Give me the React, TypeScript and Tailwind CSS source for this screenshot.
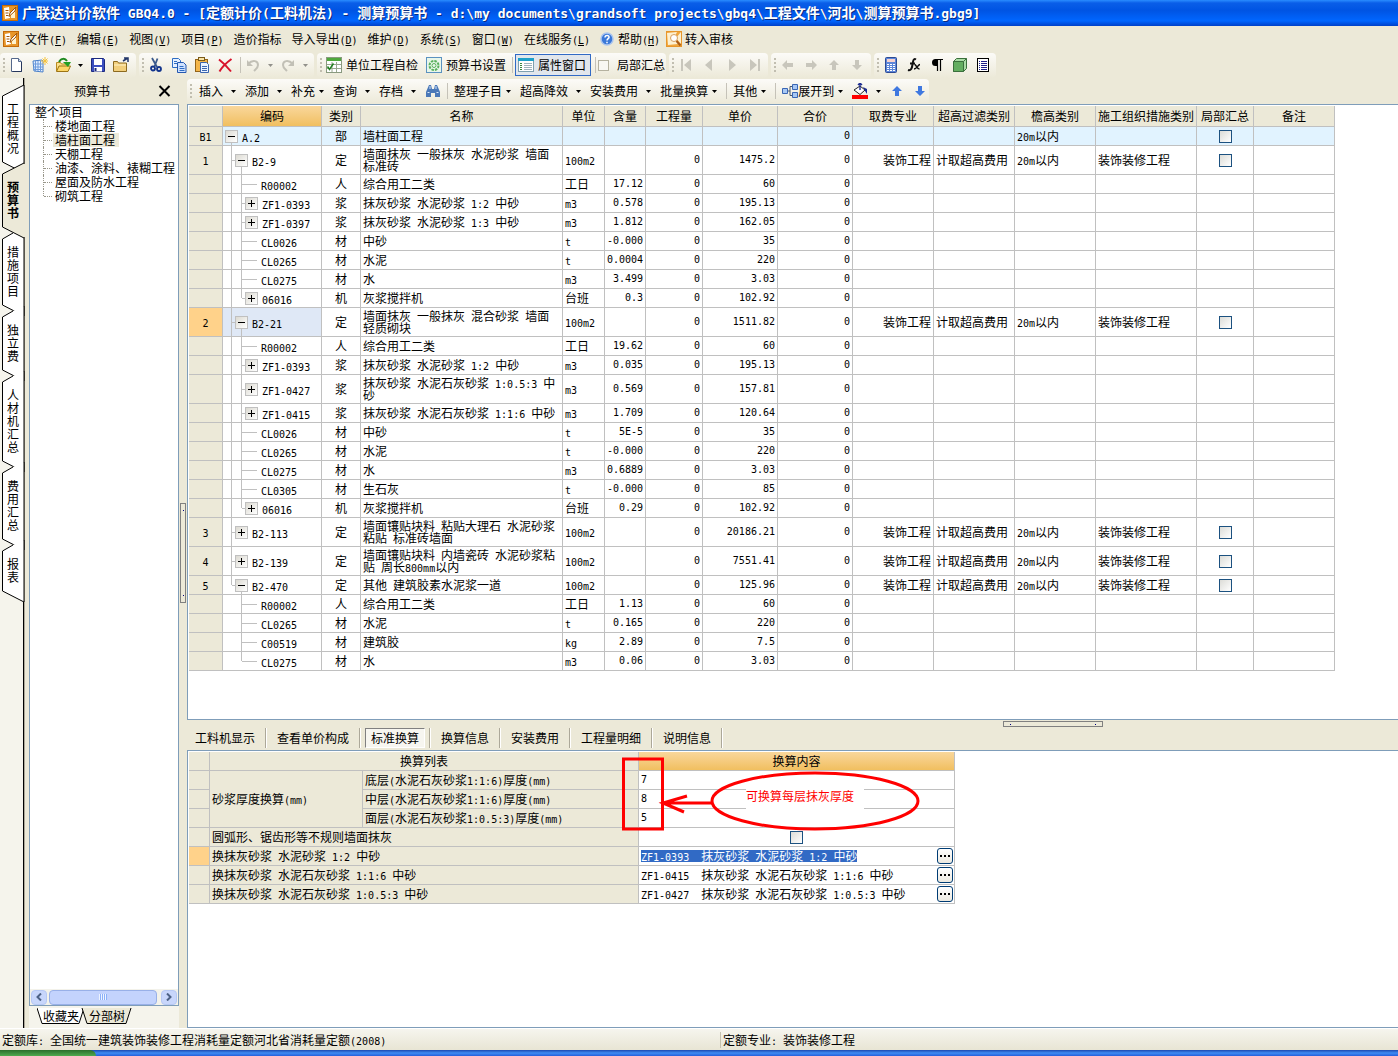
import { Fragment, useState, type ReactNode } from "react";

const CODE_FONT = "font-['DejaVu_Sans_Mono',monospace]";

// Latin runs are set in a mono face so two of them fill one Chinese glyph
function Txt({ children }: { children: string }) {
  const parts = children.match(/[\x20-\x7e]+|[^\x20-\x7e]+/g) ?? [];
  return (
    <>
      {parts.map((part, i) =>
        /^[\x20-\x7e]/.test(part) ? (
          <span key={i} className="font-['DejaVu_Sans_Mono',monospace] text-[10px] leading-0">
            {part}
          </span>
        ) : (
          <Fragment key={i}>{part}</Fragment>
        ),
      )}
    </>
  );
}

type Row = {
  no?: string;
  level: 0 | 1 | 2;
  box?: "+" | "-";
  last?: boolean;
  pass?: boolean;
  code: string;
  kind: string;
  name: string;
  unit?: string;
  amount?: string;
  price?: string;
  tall?: boolean;
};

const ROWS: Row[] = [
  { no: "B1", level: 0, box: "-", code: "A.2", kind: "部", name: "墙柱面工程" },
  { no: "1", level: 1, box: "-", code: "B2-9", kind: "定", name: "墙面抹灰 一般抹灰 水泥砂浆 墙面标准砖", unit: "100m2", price: "1475.2", tall: true },
  { level: 2, pass: true, code: "R00002", kind: "人", name: "综合用工二类", unit: "工日", amount: "17.12", price: "60" },
  { level: 2, pass: true, box: "+", code: "ZF1-0393", kind: "浆", name: "抹灰砂浆 水泥砂浆 1:2 中砂", unit: "m3", amount: "0.578", price: "195.13" },
  { level: 2, pass: true, box: "+", code: "ZF1-0397", kind: "浆", name: "抹灰砂浆 水泥砂浆 1:3 中砂", unit: "m3", amount: "1.812", price: "162.05" },
  { level: 2, pass: true, code: "CL0026", kind: "材", name: "中砂", unit: "t", amount: "-0.000", price: "35" },
  { level: 2, pass: true, code: "CL0265", kind: "材", name: "水泥", unit: "t", amount: "0.0004", price: "220" },
  { level: 2, pass: true, code: "CL0275", kind: "材", name: "水", unit: "m3", amount: "3.499", price: "3.03" },
  { level: 2, pass: true, box: "+", last: true, code: "06016", kind: "机", name: "灰浆搅拌机", unit: "台班", amount: "0.3", price: "102.92" },
  { no: "2", level: 1, box: "-", code: "B2-21", kind: "定", name: "墙面抹灰 一般抹灰 混合砂浆 墙面轻质砌块", unit: "100m2", price: "1511.82", tall: true },
  { level: 2, pass: true, code: "R00002", kind: "人", name: "综合用工二类", unit: "工日", amount: "19.62", price: "60" },
  { level: 2, pass: true, box: "+", code: "ZF1-0393", kind: "浆", name: "抹灰砂浆 水泥砂浆 1:2 中砂", unit: "m3", amount: "0.035", price: "195.13" },
  { level: 2, pass: true, box: "+", code: "ZF1-0427", kind: "浆", name: "抹灰砂浆 水泥石灰砂浆 1:0.5:3 中砂", unit: "m3", amount: "0.569", price: "157.81", tall: true },
  { level: 2, pass: true, box: "+", code: "ZF1-0415", kind: "浆", name: "抹灰砂浆 水泥石灰砂浆 1:1:6 中砂", unit: "m3", amount: "1.709", price: "120.64" },
  { level: 2, pass: true, code: "CL0026", kind: "材", name: "中砂", unit: "t", amount: "5E-5", price: "35" },
  { level: 2, pass: true, code: "CL0265", kind: "材", name: "水泥", unit: "t", amount: "-0.000", price: "220" },
  { level: 2, pass: true, code: "CL0275", kind: "材", name: "水", unit: "m3", amount: "0.6889", price: "3.03" },
  { level: 2, pass: true, code: "CL0305", kind: "材", name: "生石灰", unit: "t", amount: "-0.000", price: "85" },
  { level: 2, pass: true, box: "+", last: true, code: "06016", kind: "机", name: "灰浆搅拌机", unit: "台班", amount: "0.29", price: "102.92" },
  { no: "3", level: 1, box: "+", code: "B2-113", kind: "定", name: "墙面镶贴块料 粘贴大理石 水泥砂浆粘贴 标准砖墙面", unit: "100m2", price: "20186.21", tall: true },
  { no: "4", level: 1, box: "+", code: "B2-139", kind: "定", name: "墙面镶贴块料 内墙瓷砖 水泥砂浆粘贴 周长800mm以内", unit: "100m2", price: "7551.41", tall: true },
  { no: "5", level: 1, box: "-", last: true, code: "B2-470", kind: "定", name: "其他 建筑胶素水泥浆一道", unit: "100m2", price: "125.96" },
  { level: 2, code: "R00002", kind: "人", name: "综合用工二类", unit: "工日", amount: "1.13", price: "60" },
  { level: 2, code: "CL0265", kind: "材", name: "水泥", unit: "t", amount: "0.165", price: "220" },
  { level: 2, code: "C00519", kind: "材", name: "建筑胶", unit: "kg", amount: "2.89", price: "7.5" },
  { level: 2, last: true, code: "CL0275", kind: "材", name: "水", unit: "m3", amount: "0.06", price: "3.03" },
];

const COLUMNS = [
  { title: "", width: 34 },
  { title: "编码", width: 99 },
  { title: "类别", width: 39 },
  { title: "名称", width: 202 },
  { title: "单位", width: 42 },
  { title: "含量", width: 41 },
  { title: "工程量", width: 57 },
  { title: "单价", width: 75 },
  { title: "合价", width: 75 },
  { title: "取费专业", width: 81 },
  { title: "超高过滤类别", width: 81 },
  { title: "檐高类别", width: 81 },
  { title: "施工组织措施类别", width: 101 },
  { title: "局部汇总", width: 57 },
  { title: "备注", width: 81 },
];

const MENUS = [
  ["文件", "F"],
  ["编辑", "E"],
  ["视图", "V"],
  ["项目", "P"],
  ["造价指标", ""],
  ["导入导出", "D"],
  ["维护", "D"],
  ["系统", "S"],
  ["窗口", "W"],
  ["在线服务", "L"],
];

const SIDE_TABS = ["工程概况", "预算书", "措施项目", "独立费", "人材机汇总", "费用汇总", "报表"];
const TREE = ["楼地面工程", "墙柱面工程", "天棚工程", "油漆、涂料、裱糊工程", "屋面及防水工程", "砌筑工程"];
const DETAIL_TABS = ["工料机显示", "查看单价构成", "标准换算", "换算信息", "安装费用", "工程量明细", "说明信息"];

/* ---------- icons ---------- */

function Icon({ children }: { children: ReactNode }) {
  return (
    <svg width="16" height="16" viewBox="0 0 16 16" fill="none" className="shrink-0" aria-hidden="true">
      {children}
    </svg>
  );
}

const LogoIcon = () => (
  <Icon>
    <rect x="0.500" y="0.500" width="15" height="15" fill="#e8962a" stroke="#c46a08" />
    <path d="M2 3l5-1 1 11-5 1z" fill="#fff" />
    <path d="M3.500 5.500h3M3.500 8h3M4 10.500h2.500" stroke="#a35606" />
    <path d="M9 13V8l4-2v7z" fill="#fff3cf" />
    <path d="M14 2L8 8l-1 3.500L13 6z" fill="#fff" stroke="#a35606" />
  </Icon>
);
const NewIcon = () => (
  <Icon>
    <path d="M2.500 1.500h7l3 3v10h-10z" fill="#fff" stroke="#55688c" />
    <path d="M9.500 1.500v3h3" fill="#cfdcf2" stroke="#55688c" />
    <path d="M12.500 5v9.500h-9" stroke="#26375c" />
  </Icon>
);
const SheetIcon = () => (
  <Icon>
    <path d="M1 4l9-1 1 1v11l-9-1z" fill="#e3efff" stroke="#4a80c8" />
    <path d="M3.500 4v10M6 4v10M8.500 4v11M1 7h10M1 10h10M1 12.500h10" stroke="#6d9bdc" />
    <path d="M13 0v8M9 4h7M10.500 1.500l5 5M15.500 1.500l-5 5" stroke="#f5c23b" />
  </Icon>
);
const OpenIcon = () => (
  <Icon>
    <path d="M1.500 14V5.500h4l1 1.500h6V9" fill="#fbe08a" stroke="#b98a1f" />
    <path d="M1.500 14.500 4 9h11.500L13 14.500z" fill="#fcd667" stroke="#9c7414" />
    <path d="M4 5c2-4 6-4 8-1" stroke="#1f8a20" strokeWidth="2" />
    <path d="M8 5h8l-3 5z" fill="#22a022" />
  </Icon>
);
const SaveIcon = () => (
  <Icon>
    <path d="M1.500 1.500h12l1 1v12h-13z" fill="#3c4fc0" stroke="#1c2a80" />
    <path d="M4 2h8v6H4zM4 10h8v4.500H4z" fill="#fff" />
    <path d="M5.500 11v3" stroke="#1c2a80" strokeWidth="2" />
  </Icon>
);
const FolderIcon = () => (
  <Icon>
    <path d="M0.500 14.500v-10h4l1 1.500h8v8.500z" fill="#f2cf7c" stroke="#8c6a20" />
    <path d="M1 8h12" stroke="#fff3c8" />
    <path d="M10 4l4-2.500M11 1h4v4" stroke="#203468" strokeWidth="1.500" />
  </Icon>
);
const CutIcon = () => (
  <Icon>
    <path d="M4 1l5 9M9.500 1.500 6.500 9.500" stroke="#3b5a8c" strokeWidth="1.800" />
    <circle cx="5" cy="11.500" r="2" stroke="#12348c" strokeWidth="1.800" />
    <circle cx="11" cy="12" r="2" stroke="#12348c" strokeWidth="1.800" />
  </Icon>
);
const CopyIcon = () => (
  <Icon>
    <path d="M1.500 1.500h6l2 2v7h-8z" fill="#e6f1ff" stroke="#2f6dc4" />
    <path d="M6.500 5.500h6l2.500 2.500v7.500H6.500z" fill="#cfe2ff" stroke="#2458b0" />
    <path d="M3 4.500h3M3 6.500h3M8.500 9.500h4M8.500 11.500h5M8.500 13.500h5" stroke="#2f6dc4" />
  </Icon>
);
const PasteIcon = () => (
  <Icon>
    <rect x="1.500" y="2.500" width="12" height="12" fill="#f4b64a" stroke="#94651a" />
    <rect x="4.500" y="0.500" width="6" height="3" fill="#f9e3a4" stroke="#7a5a1a" />
    <path d="M6.500 5.500h6l2 2v8h-8z" fill="#eaf3ff" stroke="#3b66b0" />
    <path d="M8 9.500h5M8 11.500h5M8 13.500h5" stroke="#3b66b0" />
  </Icon>
);
const DeleteIcon = () => (
  <Icon>
    <path d="M2 2.500c4 3 8 7 12 12M14.500 2C9 6 5 10 2.500 14.500" stroke="#d8142c" strokeWidth="2" />
  </Icon>
);
const UndoIcon = ({ flip }: { flip?: boolean }) => (
  <Icon>
    <g transform={flip ? "matrix(-1 0 0 1 16 0)" : undefined}>
      <path d="M3 7c5-5 10-3 10 1 0 3-2 4-4 6" stroke="#c2c0b6" strokeWidth="2" />
      <path d="M2 3v6h6z" fill="#c2c0b6" />
    </g>
  </Icon>
);
const CheckSheetIcon = () => (
  <Icon>
    <rect x="0.500" y="0.500" width="15" height="15" fill="#fff" stroke="#8a9a80" />
    <path d="M1 1h14v3H1z" fill="#4ea83c" />
    <path d="M1 7.500h14M1 11.500h14M6 5v10M10.500 5v10" stroke="#9aa890" />
    <path d="M1.500 9.500l2 3 4-6" stroke="#208020" strokeWidth="1.500" />
  </Icon>
);
const GearSheetIcon = () => (
  <Icon>
    <rect x="0.500" y="0.500" width="15" height="15" fill="#e8f6ea" stroke="#5b92c0" />
    <circle cx="8" cy="8.500" r="4.500" stroke="#58b05c" strokeWidth="2" strokeDasharray="2.500 1" />
    <circle cx="8" cy="8.500" r="2" stroke="#58b05c" />
  </Icon>
);
const PropsIcon = () => (
  <Icon>
    <rect x="0.500" y="1.500" width="15" height="13" fill="#fff" stroke="#7fa0b0" />
    <path d="M0 1h16v3H0z" fill="#1da0c8" />
    <path d="M2 6.500h2M2 8.500h2M2 10.500h2M2 12.500h2" stroke="#38883c" />
    <path d="M6 6.500h8M6 8.500h8M6 10.500h8M6 12.500h8" stroke="#9fb2bc" />
  </Icon>
);
const NavIcon = ({ kind }: { kind: "first" | "prev" | "next" | "last" }) => (
  <Icon>
    {kind === "first" && <path d="M3 2h2v12H3zM13 2v12L6 8z" fill="#c8c6bc" />}
    {kind === "prev" && <path d="M11 2v12L4 8z" fill="#c8c6bc" />}
    {kind === "next" && <path d="M5 2v12l7-6z" fill="#c8c6bc" />}
    {kind === "last" && <path d="M11 2h2v12h-2zM3 2v12l7-6z" fill="#c8c6bc" />}
  </Icon>
);

const ARROWS = {
  left: "M2 8l5-5v3h6v4H7v3z",
  right: "M14 8L9 3v3H3v4h6v3z",
  up: "M8 3l5 5h-3v5H6V8H3z",
  down: "M8 13l5-5h-3V3H6v5H3z",
};
const ArrowIcon = ({ dir, color }: { dir: keyof typeof ARROWS; color: string }) => (
  <Icon>
    <path d={ARROWS[dir]} fill={color} />
  </Icon>
);
const CalcIcon = () => (
  <Icon>
    <rect x="2.500" y="0.500" width="11" height="15" rx="1" fill="#5d86d8" stroke="#2c4a94" />
    <path d="M4 2h8v3H4z" fill="#f6d2cf" />
    <path d="M4 7.500h8M4 9.500h8M4 11.500h8M4 13.500h8" stroke="#fff" strokeDasharray="2 1" />
  </Icon>
);
const FxIcon = () => (
  <Icon>
    <path d="M10 2.500C7.500 1 7 4 6.500 7.500S5 14 2 13M4 6.500h5" stroke="#111" strokeWidth="2" />
    <path d="M8.500 7.500c2 0 2 4.500 5 4.500M14 7.500c-2 0-3 4.500-6 4.500" stroke="#111" strokeWidth="1.500" />
  </Icon>
);
const ParaIcon = () => (
  <Icon>
    <path d="M8 2H6.500a3.500 3.500 0 0 0 0 7H8z" fill="#000" />
    <path d="M8.500 2v12M11.500 2v12M6 2.500h8" stroke="#000" strokeWidth="1.200" />
  </Icon>
);
const CubeIcon = () => (
  <Icon>
    <path d="M1.500 4.500l3-3h10v10l-3 3h-10z" fill="#a9dca5" stroke="#3a6f3c" />
    <path d="M1.500 4.500h10v10h-10z" fill="#63ad60" stroke="#3a6f3c" />
    <path d="M11.500 4.500l3-3" stroke="#3a6f3c" />
  </Icon>
);
const ListIcon = () => (
  <Icon>
    <rect x="2.500" y="1.500" width="11" height="13" fill="#fff" stroke="#000" />
    <path d="M4 4.500h1M6 4.500h6M4 6.500h1M6 6.500h6M4 8.500h1M6 8.500h6M4 10.500h1M6 10.500h6M4 12.500h1M6 12.500h6" stroke="#20208a" />
  </Icon>
);
const FindIcon = () => (
  <Icon>
    <path d="M1 14V9l3-7h2l1 4h2l1-4h2l3 7v5h-5v-4H6v4z" fill="#4a78b8" />
    <path d="M2.500 9.500h2M11.500 9.500h2M5 3v3M11 3v3" stroke="#d6e6fa" />
  </Icon>
);
const ExpandIcon = () => (
  <Icon>
    <path d="M6 8h2M8 3.500v9M8 3.500h2M8 12.500h2" stroke="#46566e" />
    <path d="M0.500 5.500h5v5h-5zM10.500 1.500h5v5h-5zM10.500 9.500h5v5h-5z" fill="#a8c8f4" stroke="#3a66b4" />
  </Icon>
);
const FillIcon = () => (
  <Icon>
    <path d="M2 7l6-4 5 4-5 4.500z" fill="#fff" stroke="#222" />
    <path d="M8 0v7M6 2l2-2 2 2" stroke="#1c2c90" strokeWidth="1.400" />
    <path d="M11 4l4 2v5l-2-3z" fill="#1c2c90" />
    <path d="M0 12h16v4H0z" fill="#f00" />
  </Icon>
);
const HelpIcon = () => (
  <svg width="14" height="14" viewBox="0 0 14 14" fill="none" className="shrink-0" aria-hidden="true">
    <circle cx="7" cy="7" r="6" fill="#3a78d8" stroke="#a9c4ee" strokeWidth="1.500" />
    <path d="M5 5.500C5 2.500 9.500 3 9 5.500 8.800 6.500 7 7 7 8.500M7 9.800v1.500" stroke="#fff" strokeWidth="1.500" />
  </svg>
);
const AuditIcon = () => (
  <Icon>
    <rect x="0.500" y="0.500" width="15" height="15" fill="#f0a63c" stroke="#e8962a" />
    <path d="M1 2l10-1-3 6 4 6-10 1z" fill="#fdf0d0" />
    <path d="M15 1l-5 6 5 6z" fill="#fdf0d0" />
    <circle cx="8" cy="7" r="3.500" fill="#fff" stroke="#d8a060" />
    <path d="M10.500 10l4 4.500" stroke="#a85a18" strokeWidth="2" />
  </Icon>
);
const Caret = () => (
  <svg width="5" height="3" viewBox="0 0 5 3" className="shrink-0" aria-hidden="true">
    <path d="M0 0h5L2.500 3z" fill="#000" />
  </svg>
);

/* ---------- toolbar parts ---------- */

function Group({ className, children }: { className: string; children: ReactNode }) {
  return (
    <div className={`flex h-[25px] shrink-0 items-center rounded-sm bg-gradient-to-b from-[#fcfbf8] to-[#ece9d8] pl-[3px] ${className}`}>
      <span className="h-[15px] w-0.5 shrink-0 bg-[repeating-linear-gradient(#c1beb0_0_2px,transparent_2px_4px)]" />
      {children}
    </div>
  );
}

function ToolButton({ label, children }: { label: string; children: ReactNode }) {
  return (
    <button type="button" aria-label={label} className="flex h-6 w-[23px] shrink-0 items-center justify-center">
      {children}
    </button>
  );
}

function DropButton({ label, tight }: { label: string; tight?: boolean }) {
  return (
    <button type="button" className={`flex shrink-0 items-center pr-[9px] ${tight ? "gap-1" : "gap-2"}`}>
      {label}
      <Caret />
    </button>
  );
}

const Sep = () => <span className="mr-1.5 h-4 w-px shrink-0 bg-[#c5c2b8]" />;

function TitleBar() {
  return (
    <header className="flex h-[26px] items-center gap-1 bg-[linear-gradient(#2a8cff_0,#0a5ee8_3px,#0054e3_40%,#0066ff_80%,#0040c8_100%)] px-0.5 pb-px">
      <LogoIcon />
      <h1 className="overflow-hidden text-sm leading-5 font-bold whitespace-pre text-white [text-shadow:1px_1px_#0a2a80]">
        {"广联达计价软件| GBQ4.0 - [|定额计价|(|工料机法|) - |测算预算书| - d:\\my documents\\grandsoft projects\\gbq4\\|工程文件|\\|河北|\\|测算预算书|.gbg9]"
          .split("|")
          .map((part, i) =>
            i % 2 ? (
              <span key={i} className="font-['DejaVu_Sans_Mono',monospace] text-[13px]">
                {part}
              </span>
            ) : (
              part
            ),
          )}
      </h1>
    </header>
  );
}

function MenuBar() {
  return (
    <nav className="flex h-[26px] items-center pl-[3px]">
      <LogoIcon />
      <div className="ml-1.5 flex gap-2.5 whitespace-nowrap">
        {MENUS.map(([label, key]) => (
          <button key={label} type="button">
            {label}
            {key && (
              <span className="font-['DejaVu_Sans_Mono',monospace] text-[10px]">
                (<u>{key}</u>)
              </span>
            )}
          </button>
        ))}
        <button type="button" className="flex items-center gap-1">
          <HelpIcon />
          <span>
            帮助
            <span className="font-['DejaVu_Sans_Mono',monospace] text-[10px]">
              (<u>H</u>)
            </span>
          </span>
        </button>
        <button type="button" className="-ml-1 flex items-center gap-[3px]">
          <AuditIcon />
          转入审核
        </button>
      </div>
    </nav>
  );
}

function MainToolbar() {
  return (
    <div className="flex h-[26px] items-center gap-[3px] whitespace-nowrap">
      <Group className="w-[136px]">
        <ToolButton label="新建"><NewIcon /></ToolButton>
        <ToolButton label="新建表"><SheetIcon /></ToolButton>
        <ToolButton label="打开"><OpenIcon /></ToolButton>
        <span className="w-3 pl-1"><Caret /></span>
        <ToolButton label="保存"><SaveIcon /></ToolButton>
        <ToolButton label="目录"><FolderIcon /></ToolButton>
      </Group>
      <Group className="w-[175px]">
        <ToolButton label="剪切"><CutIcon /></ToolButton>
        <ToolButton label="复制"><CopyIcon /></ToolButton>
        <ToolButton label="粘贴"><PasteIcon /></ToolButton>
        <ToolButton label="删除"><DeleteIcon /></ToolButton>
        <span className="ml-1 h-4 w-px bg-[#c5c2b8]" />
        <ToolButton label="撤销"><UndoIcon /></ToolButton>
        <span className="w-3 pl-1 opacity-40"><Caret /></span>
        <ToolButton label="重做"><UndoIcon flip /></ToolButton>
        <span className="w-3 pl-1 opacity-40"><Caret /></span>
      </Group>
      <Group className="w-[349px]">
        <button type="button" className="ml-1 flex items-center gap-1">
          <CheckSheetIcon />
          单位工程自检
        </button>
        <button type="button" className="ml-2 flex items-center gap-1">
          <GearSheetIcon />
          预算书设置
        </button>
        <span className="ml-1.5 h-4 w-px bg-[#c5c2b8]" />
        <button type="button" className="ml-0.5 flex h-[22px] items-center gap-1 border border-[#316ac5] bg-[#e1e6ec] pr-1 pl-0.5">
          <PropsIcon />
          属性窗口
        </button>
        <span className="ml-1 h-4 w-px bg-[#c5c2b8]" />
        <label className="ml-0.5 flex items-center gap-2">
          <input type="checkbox" className="size-[11px] appearance-none border border-[#b5b2a0] bg-[#f8f7f2]" />
          局部汇总
        </label>
      </Group>
      <Group className="w-[99px]">
        <ToolButton label="首条"><NavIcon kind="first" /></ToolButton>
        <ToolButton label="上一条"><NavIcon kind="prev" /></ToolButton>
        <ToolButton label="下一条"><NavIcon kind="next" /></ToolButton>
        <ToolButton label="末条"><NavIcon kind="last" /></ToolButton>
      </Group>
      <Group className="w-[100px]">
        <ToolButton label="左移"><ArrowIcon dir="left" color="#c8c6bc" /></ToolButton>
        <ToolButton label="右移"><ArrowIcon dir="right" color="#c8c6bc" /></ToolButton>
        <ToolButton label="上移"><ArrowIcon dir="up" color="#c8c6bc" /></ToolButton>
        <ToolButton label="下移"><ArrowIcon dir="down" color="#c8c6bc" /></ToolButton>
      </Group>
      <Group className="w-[122px]">
        <ToolButton label="计算器"><CalcIcon /></ToolButton>
        <ToolButton label="函数"><FxIcon /></ToolButton>
        <ToolButton label="段落"><ParaIcon /></ToolButton>
        <ToolButton label="模型"><CubeIcon /></ToolButton>
        <ToolButton label="列表"><ListIcon /></ToolButton>
      </Group>
    </div>
  );
}

function EditToolbar() {
  return (
    <div className="flex h-[26px] items-center whitespace-nowrap">
      <Group className="w-[742px]">
        <span className="w-[7px] shrink-0" />
        <DropButton label="插入" />
        <DropButton label="添加" />
        <DropButton label="补充" tight />
        <DropButton label="查询" />
        <DropButton label="存档" />
        <button type="button" aria-label="查找" className="mr-1.5"><FindIcon /></button>
        <Sep />
        <DropButton label="整理子目" tight />
        <DropButton label="超高降效" />
        <DropButton label="安装费用" />
        <DropButton label="批量换算" tight />
        <Sep />
        <DropButton label="其他" tight />
        <Sep />
        <ExpandIcon />
        <span className="w-0.5" />
        <DropButton label="展开到" tight />
        <button type="button" aria-label="填充颜色" className="mr-1 flex items-center gap-2">
          <FillIcon />
          <Caret />
        </button>
        <div className="flex">
          <ToolButton label="上移"><ArrowIcon dir="up" color="#3f78e0" /></ToolButton>
          <ToolButton label="下移"><ArrowIcon dir="down" color="#3f78e0" /></ToolButton>
        </div>
      </Group>
    </div>
  );
}

/* ---------- left side ---------- */

function SideTabs({ active, onPick }: { active: string; onPick: (tab: string) => void }) {
  return (
    <nav className="flex w-6 shrink-0 flex-col border-r border-black bg-[#f5f4ec] pt-[18px]">
      {SIDE_TABS.map((tab, i) => {
        const on = tab === active;
        const h = tab.length * 13 + 26;
        const top = on || i === 0 ? "M24 -11L2.5 0" : "M13 -6L2.5 0";
        return (
          <button
            key={tab}
            type="button"
            onClick={() => onPick(tab)}
            className={`relative block w-6 pt-1.5 pb-5 pl-[7px] text-left ${on ? "z-10" : ""}`}
          >
            <svg width="25" height={h} className="absolute top-0 left-0 overflow-visible" aria-hidden="true">
              <path
                d={`${top}V${h - 12}L24 ${h - 1}${on ? "" : "V-11"}`}
                fill={on ? "#ece9d8" : "#fff"}
                stroke="#000"
              />
              {on && <path d={`M24.500 -10V${h - 2}`} stroke="#ece9d8" strokeWidth="2" />}
            </svg>
            <span className={`relative block w-3 leading-[13px] break-all ${on ? "font-bold" : ""}`}>{tab}</span>
          </button>
        );
      })}
    </nav>
  );
}

function ProjectPanel() {
  return (
    <aside className="flex w-[155px] shrink-0 flex-col border-l border-[#aca899] pl-1">
      <div className="flex h-[26px] items-center justify-end gap-12 pr-2">
        <h2>预算书</h2>
        <button type="button" aria-label="关闭">
          <svg width="13" height="12" viewBox="0 0 13 12" aria-hidden="true">
            <path d="M1.500 1l10 10M11.500 1l-10 10" stroke="#000" strokeWidth="2" />
          </svg>
        </button>
      </div>
      <div className="flex flex-1 flex-col border border-[#7f9db9] bg-white">
        <ul className="flex-1 pl-[5px] leading-[14px] whitespace-nowrap">
          <li>
            整个项目
            <ul className="pl-2">
              {TREE.map((name, i) => (
                <li key={name} className="flex h-3.5">
                  <span className={`w-px border-l border-dotted border-[#98968a] ${i === TREE.length - 1 ? "h-[7px]" : "h-full"}`} />
                  <span className="mr-px h-2 w-2 border-b border-dotted border-[#98968a]" />
                  <button type="button" className={`px-0.5 ${i === 1 ? "bg-[#ece9d8] pr-1" : ""}`}>
                    {name}
                  </button>
                </li>
              ))}
            </ul>
          </li>
        </ul>
        <div className="flex h-4 items-center gap-0.5 bg-[#f3f2ea] px-px">
          <button type="button" aria-label="向左" className="flex h-[15px] w-4 items-center justify-center rounded-sm border border-[#b6c8f4] bg-[#c8d6fb]">
            <svg width="6" height="8" viewBox="0 0 6 8" fill="none"><path d="M5 0.500L1.500 4 5 7.500" stroke="#4d6185" strokeWidth="2" /></svg>
          </button>
          <div className="flex h-[15px] flex-1 items-center justify-center rounded-sm border border-[#98b0e8] bg-[#c3d3fd]">
            <span className="h-1.5 w-2 bg-[repeating-linear-gradient(90deg,#eef4fe_0_1px,#8cb0f8_1px_2px)]" />
          </div>
          <button type="button" aria-label="向右" className="ml-0.5 flex h-[15px] w-4 items-center justify-center rounded-sm border border-[#b6c8f4] bg-[#c8d6fb]">
            <svg width="6" height="8" viewBox="0 0 6 8" fill="none"><path d="M1 0.500L4.500 4 1 7.500" stroke="#4d6185" strokeWidth="2" /></svg>
          </button>
        </div>
      </div>
      <div className="relative flex h-[22px] gap-2.5 bg-[#f5f4ec] pt-0.5 pl-3.5">
        <svg width="100" height="18" className="absolute top-0.5 left-2" fill="none" aria-hidden="true">
          <path d="M0 0L5 15.500H42L47 0" fill="#fff" stroke="#000" />
          <path d="M45 0L50 15.500H89L94 0" fill="#ece9d8" stroke="#000" />
        </svg>
        <button type="button" className="relative h-4">收藏夹</button>
        <button type="button" className="relative h-4">分部树</button>
      </div>
    </aside>
  );
}

/* ---------- budget grid ---------- */

const CELL = "border-r border-b border-[#c0c0c0] px-0.5 py-0";

function TreeCell({ row }: { row: Row }) {
  return (
    <div className={`flex ${row.tall ? "h-7" : "h-[18px]"} ${row.level === 0 ? "pl-0.5" : "pl-2"}`}>
      {row.level === 2 && <span className={`mr-[9px] w-px ${row.pass ? "bg-[#c0c0c0]" : ""}`} />}
      {row.level > 0 && (
        <span className={`flex ${row.box ? "w-1" : "w-4"}`}>
          <span className={`w-px bg-[#c0c0c0] ${row.last ? "h-[9px]" : "h-full"}`} />
          <span className="h-px flex-1 self-center bg-[#c0c0c0]" />
        </span>
      )}
      {row.box && (
        <span className="flex w-[13px] flex-col items-center">
          <span className="flex-1" />
          <button
            type="button"
            aria-label={row.box === "-" ? "折叠" : "展开"}
            className="flex size-[13px] items-center justify-center border border-[#c0c0c0] bg-gradient-to-br from-[#dcdad2] to-white"
          >
            <svg width="7" height="7" viewBox="0 0 7 7" aria-hidden="true">
              <path d={row.box === "-" ? "M0 3.500h7" : "M0 3.500h7M3.500 0v7"} stroke="#000" />
            </svg>
          </button>
          <span className={`w-px flex-1 ${row.box === "-" ? "bg-[#c0c0c0]" : ""}`} />
        </span>
      )}
      <span className="self-center pt-0.5 pl-1">
        <Txt>{row.code}</Txt>
      </span>
    </div>
  );
}

function BudgetGrid() {
  const num = `${CELL} text-right font-['DejaVu_Sans_Mono',monospace] text-[10px]`;
  return (
    <table className="w-[1146px] table-fixed border-separate border-spacing-0 leading-3">
      <colgroup>
        {COLUMNS.map((col, i) => (
          <col key={i} style={{ width: col.width }} />
        ))}
      </colgroup>
      <thead>
        <tr className="h-[21px]">
          {COLUMNS.map((col, i) => (
            <th
              key={i}
              className={`border-r border-b border-[#c0c0c0] p-0 font-normal whitespace-nowrap ${
                i === 1 ? "bg-gradient-to-b from-[#f9d79b] to-[#f1bf5f]" : "bg-[#ece9d8]"
              }`}
            >
              {col.title}
            </th>
          ))}
        </tr>
      </thead>
      <tbody>
        {ROWS.map((row, i) => {
          const current = row.no === "2";
          const item = row.level === 1;
          return (
            <tr key={i} className={`${row.tall ? "h-[29px]" : "h-[19px]"} ${row.level === 0 ? "bg-[#e1f3ff]" : ""}`}>
              <th className={`${CELL} text-center font-normal ${current ? "bg-[#ffd28a]" : "bg-[#ece9d8]"}`}>
                <Txt>{row.no ?? ""}</Txt>
              </th>
              <td className={`border-r border-b border-[#c0c0c0] p-0 ${current ? "bg-[#dfe8f6]" : ""}`}>
                <TreeCell row={row} />
              </td>
              <td className={`${CELL} text-center`}>{row.kind}</td>
              <td className="border-r border-b border-[#c0c0c0] py-0 pr-1 pl-0.5">
                <Txt>{row.name}</Txt>
              </td>
              <td className={CELL}>
                <Txt>{row.unit ?? ""}</Txt>
              </td>
              <td className={num}>{row.amount}</td>
              <td className={num}>{row.level > 0 && "0"}</td>
              <td className={num}>{row.price}</td>
              <td className={num}>0</td>
              <td className={`${CELL} text-right`}>{item && "装饰工程"}</td>
              <td className={CELL}>{item && "计取超高费用"}</td>
              <td className={CELL}>{row.level < 2 && <Txt>20m以内</Txt>}</td>
              <td className={CELL}>{item && "装饰装修工程"}</td>
              <td className={CELL}>
                {row.level < 2 && (
                  <input
                    type="checkbox"
                    aria-label={`局部汇总 ${row.code}`}
                    className="mx-auto block size-[13px] appearance-none border border-[#1c5180] bg-gradient-to-br from-[#dcdcd7] to-white"
                  />
                )}
              </td>
              <td className={CELL} />
            </tr>
          );
        })}
      </tbody>
    </table>
  );
}

/* ---------- conversion panel ---------- */

const LAYERS = [
  { name: "底层(水泥石灰砂浆1:1:6)厚度(mm)", value: "7" },
  { name: "中层(水泥石灰砂浆1:1:6)厚度(mm)", value: "8" },
  { name: "面层(水泥石灰砂浆1:0.5:3)厚度(mm)", value: "5" },
];

const SWAPS = [
  { name: "换抹灰砂浆 水泥砂浆 1:2 中砂", code: "ZF1-0393", text: "抹灰砂浆 水泥砂浆 1:2 中砂" },
  { name: "换抹灰砂浆 水泥石灰砂浆 1:1:6 中砂", code: "ZF1-0415", text: "抹灰砂浆 水泥石灰砂浆 1:1:6 中砂" },
  { name: "换抹灰砂浆 水泥石灰砂浆 1:0.5:3 中砂", code: "ZF1-0427", text: "抹灰砂浆 水泥石灰砂浆 1:0.5:3 中砂" },
];

function ConversionTable() {
  return (
    <div className="relative w-[766px]">
      <table className="w-full table-fixed border-separate border-spacing-0 leading-3">
        <colgroup>
          <col className="w-[21px]" />
          <col className="w-[153px]" />
          <col className="w-[276px]" />
          <col className="w-[316px]" />
        </colgroup>
        <thead>
          <tr className="h-[19px]">
            <th className={`${CELL} bg-[#ece9d8]`} />
            <th colSpan={2} className={`${CELL} bg-[#ece9d8] font-normal`}>换算列表</th>
            <th className={`${CELL} bg-gradient-to-b from-[#f9d79b] to-[#f1bf5f] font-normal`}>换算内容</th>
          </tr>
        </thead>
        <tbody>
          {LAYERS.map((layer, i) => (
            <tr key={layer.name} className="h-[19px]">
              <td className={`${CELL} bg-[#ece9d8]`} />
              {i === 0 && (
                <td rowSpan={3} className={`${CELL} bg-[#ece9d8]`}>
                  <Txt>砂浆厚度换算(mm)</Txt>
                </td>
              )}
              <td className={`${CELL} bg-[#ece9d8]`}>
                <Txt>{layer.name}</Txt>
              </td>
              <td className={CELL}>
                <input
                  aria-label={layer.name}
                  defaultValue={layer.value}
                  className={`block h-3 w-20 text-[10px] outline-none ${CODE_FONT}`}
                />
              </td>
            </tr>
          ))}
          <tr className="h-[19px]">
            <td className={`${CELL} bg-[#ece9d8]`} />
            <td colSpan={2} className={`${CELL} bg-[#ece9d8]`}>圆弧形、锯齿形等不规则墙面抹灰</td>
            <td className={CELL}>
              <input
                type="checkbox"
                aria-label="圆弧形、锯齿形等不规则墙面抹灰"
                className="mx-auto block size-[13px] appearance-none border border-[#1c5180] bg-gradient-to-br from-[#dcdcd7] to-white"
              />
            </td>
          </tr>
          {SWAPS.map((swap, i) => (
            <tr key={swap.code} className="h-[19px]">
              <td className={`${CELL} ${i === 0 ? "bg-[#ffd28a]" : "bg-[#ece9d8]"}`} />
              <td colSpan={2} className={`${CELL} bg-[#ece9d8]`}>
                <Txt>{swap.name}</Txt>
              </td>
              <td className="border-r border-b border-[#c0c0c0] py-0 pr-px pl-0.5">
                <div className="flex items-center justify-between">
                  <span className={`block h-3 whitespace-pre ${i === 0 ? "bg-[#316ac5] text-white" : ""}`}>
                    <Txt>{`${swap.code}  ${swap.text}`}</Txt>
                  </span>
                  <button
                    type="button"
                    aria-label="选择"
                    className="flex size-4 items-center justify-center rounded-[3px] border border-[#003c74] bg-gradient-to-b from-white to-[#ece9e0]"
                  >
                    <svg width="10" height="2" viewBox="0 0 10 2" aria-hidden="true">
                      <path d="M0 0h2v2H0zM4 0h2v2H4zM8 0h2v2H8z" fill="#000" />
                    </svg>
                  </button>
                </div>
              </td>
            </tr>
          ))}
        </tbody>
      </table>
      <svg width="300" height="82" className="pointer-events-none absolute top-1 left-[432px]" fill="none" aria-hidden="true">
        <path d="M125 30h118v23H125z" fill="#fff" />
        <g stroke="#f00" strokeWidth="3">
          <rect x="2.500" y="3" width="39" height="70" />
          <ellipse cx="194" cy="45" rx="103" ry="28" />
          <path d="M91 47H44M66 40L42 47l21 9" />
        </g>
      </svg>
      <p className="pointer-events-none absolute top-9 left-[557px] text-[#f00]">可换算每层抹灰厚度</p>
    </div>
  );
}

function DetailTabs({ active, onPick }: { active: string; onPick: (tab: string) => void }) {
  return (
    <div className="-ml-0.5 flex h-[22px] items-center whitespace-nowrap">
      {DETAIL_TABS.map((tab) => (
        <Fragment key={tab}>
          <button
            type="button"
            onClick={() => onPick(tab)}
            className={
              tab === active
                ? "mx-1 h-5 border border-t-[#808080] border-r-white border-b-white border-l-[#808080] bg-[#f7f6f0] px-[5px]"
                : "h-5 px-2.5"
            }
          >
            {tab}
          </button>
          <span className="h-5 w-0.5 border-r border-l border-r-white border-l-[#aca899]" />
        </Fragment>
      ))}
    </div>
  );
}

export default function App() {
  const [sideTab, setSideTab] = useState("预算书");
  const [detailTab, setDetailTab] = useState("标准换算");

  return (
    <div className="flex min-h-screen flex-col overflow-hidden bg-[#ece9d8] font-['Noto_Sans_CJK_SC',sans-serif] text-xs text-black">
      <TitleBar />
      <MenuBar />
      <MainToolbar />
      <div className="flex flex-1">
        <SideTabs active={sideTab} onPick={setSideTab} />
        <ProjectPanel />
        <div className="flex w-2 shrink-0 items-center pl-px">
          <div className="flex h-[100px] w-1.5 flex-col items-center justify-between border border-[#808080] py-1.5">
            <span className="size-px bg-[#000080]" />
            <span className="size-px bg-[#000080]" />
          </div>
        </div>
        <main className="flex min-w-0 flex-1 flex-col">
          <EditToolbar />
          <section className="overflow-hidden border-y border-l border-[#7f9db9] bg-white pt-px pb-12 pl-px">
            <BudgetGrid />
          </section>
          <div className="h-[30px]">
            <div className="mr-[295px] ml-auto flex h-[7px] w-[100px] items-center pt-px">
              <div className="flex h-1.5 flex-1 items-center justify-between border border-[#808080] px-1.5">
                <span className="size-px bg-[#000080]" />
                <span className="size-px bg-[#000080]" />
              </div>
            </div>
            <DetailTabs active={detailTab} onPick={setDetailTab} />
          </div>
          <section className="flex-1 overflow-hidden border border-r-0 border-[#7f9db9] bg-white pt-px pl-px">
            <ConversionTable />
          </section>
        </main>
      </div>
      <footer>
        <div className="flex h-[22px] items-center border-t border-white bg-gradient-to-b from-[#f6f5ee] to-[#e8e5d4] whitespace-pre">
          <span className="w-[721px] border-r border-[#c5c2b0] pl-0.5">
            <Txt>定额库: 全国统一建筑装饰装修工程消耗量定额河北省消耗量定额(2008)</Txt>
          </span>
          <span className="pl-0.5">
            <Txt>定额专业: 装饰装修工程</Txt>
          </span>
        </div>
        <div className="flex h-1.5 bg-gradient-to-b from-[#1d48b0] via-[#3f8cf3] to-[#245edb]">
          <span className="w-24 rounded-tr-lg bg-gradient-to-b from-[#2c6e2c] to-[#4faa4f]" />
        </div>
      </footer>
    </div>
  );
}
